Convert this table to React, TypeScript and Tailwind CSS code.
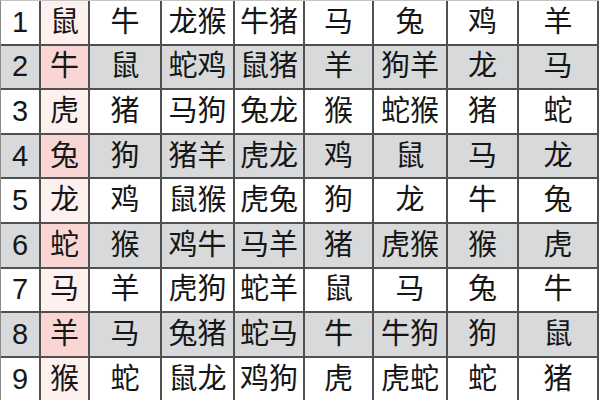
const rows: string[][] = [
  ['1', '鼠', '牛', '龙猴', '牛猪', '马', '兔', '鸡', '羊'],
  ['2', '牛', '鼠', '蛇鸡', '鼠猪', '羊', '狗羊', '龙', '马'],
  ['3', '虎', '猪', '马狗', '兔龙', '猴', '蛇猴', '猪', '蛇'],
  ['4', '兔', '狗', '猪羊', '虎龙', '鸡', '鼠', '马', '龙'],
  ['5', '龙', '鸡', '鼠猴', '虎兔', '狗', '龙', '牛', '兔'],
  ['6', '蛇', '猴', '鸡牛', '马羊', '猪', '虎猴', '猴', '虎'],
  ['7', '马', '羊', '虎狗', '蛇羊', '鼠', '马', '兔', '牛'],
  ['8', '羊', '马', '兔猪', '蛇马', '牛', '牛狗', '狗', '鼠'],
  ['9', '猴', '蛇', '鼠龙', '鸡狗', '虎', '虎蛇', '蛇', '猪'],
];

const cellBg = (row: number, col: number) => {
  const even = row % 2 === 1;
  if (col === 1) return even ? 'bg-[#f9d6d3]' : 'bg-[#fdf0ef]';
  return even ? 'bg-[#d7d9da]' : 'bg-white';
};

export default function App() {
  return (
    <div className="w-[600px] h-[400px] overflow-hidden bg-white">
      <div className="w-[599px] grid grid-cols-[38px_47px_70px_71px_68px_67px_72px_69px_78px] grid-rows-[repeat(9,42.6px)] gap-[2px] bg-[#505050] border-t border-t-[#c4c4c4] border-l border-l-[#8a8a8a] pr-[2px]">
        {rows.map((row, r) =>
          row.map((text, c) => (
            <div
              key={`${r}-${c}`}
              className={`${cellBg(r, c)} flex items-center justify-center text-[29px] leading-none text-[#161616] whitespace-nowrap font-['Liberation_Sans','Noto_Sans_CJK_SC',sans-serif]`}
            >
              {text}
            </div>
          ))
        )}
      </div>
    </div>
  );
}
